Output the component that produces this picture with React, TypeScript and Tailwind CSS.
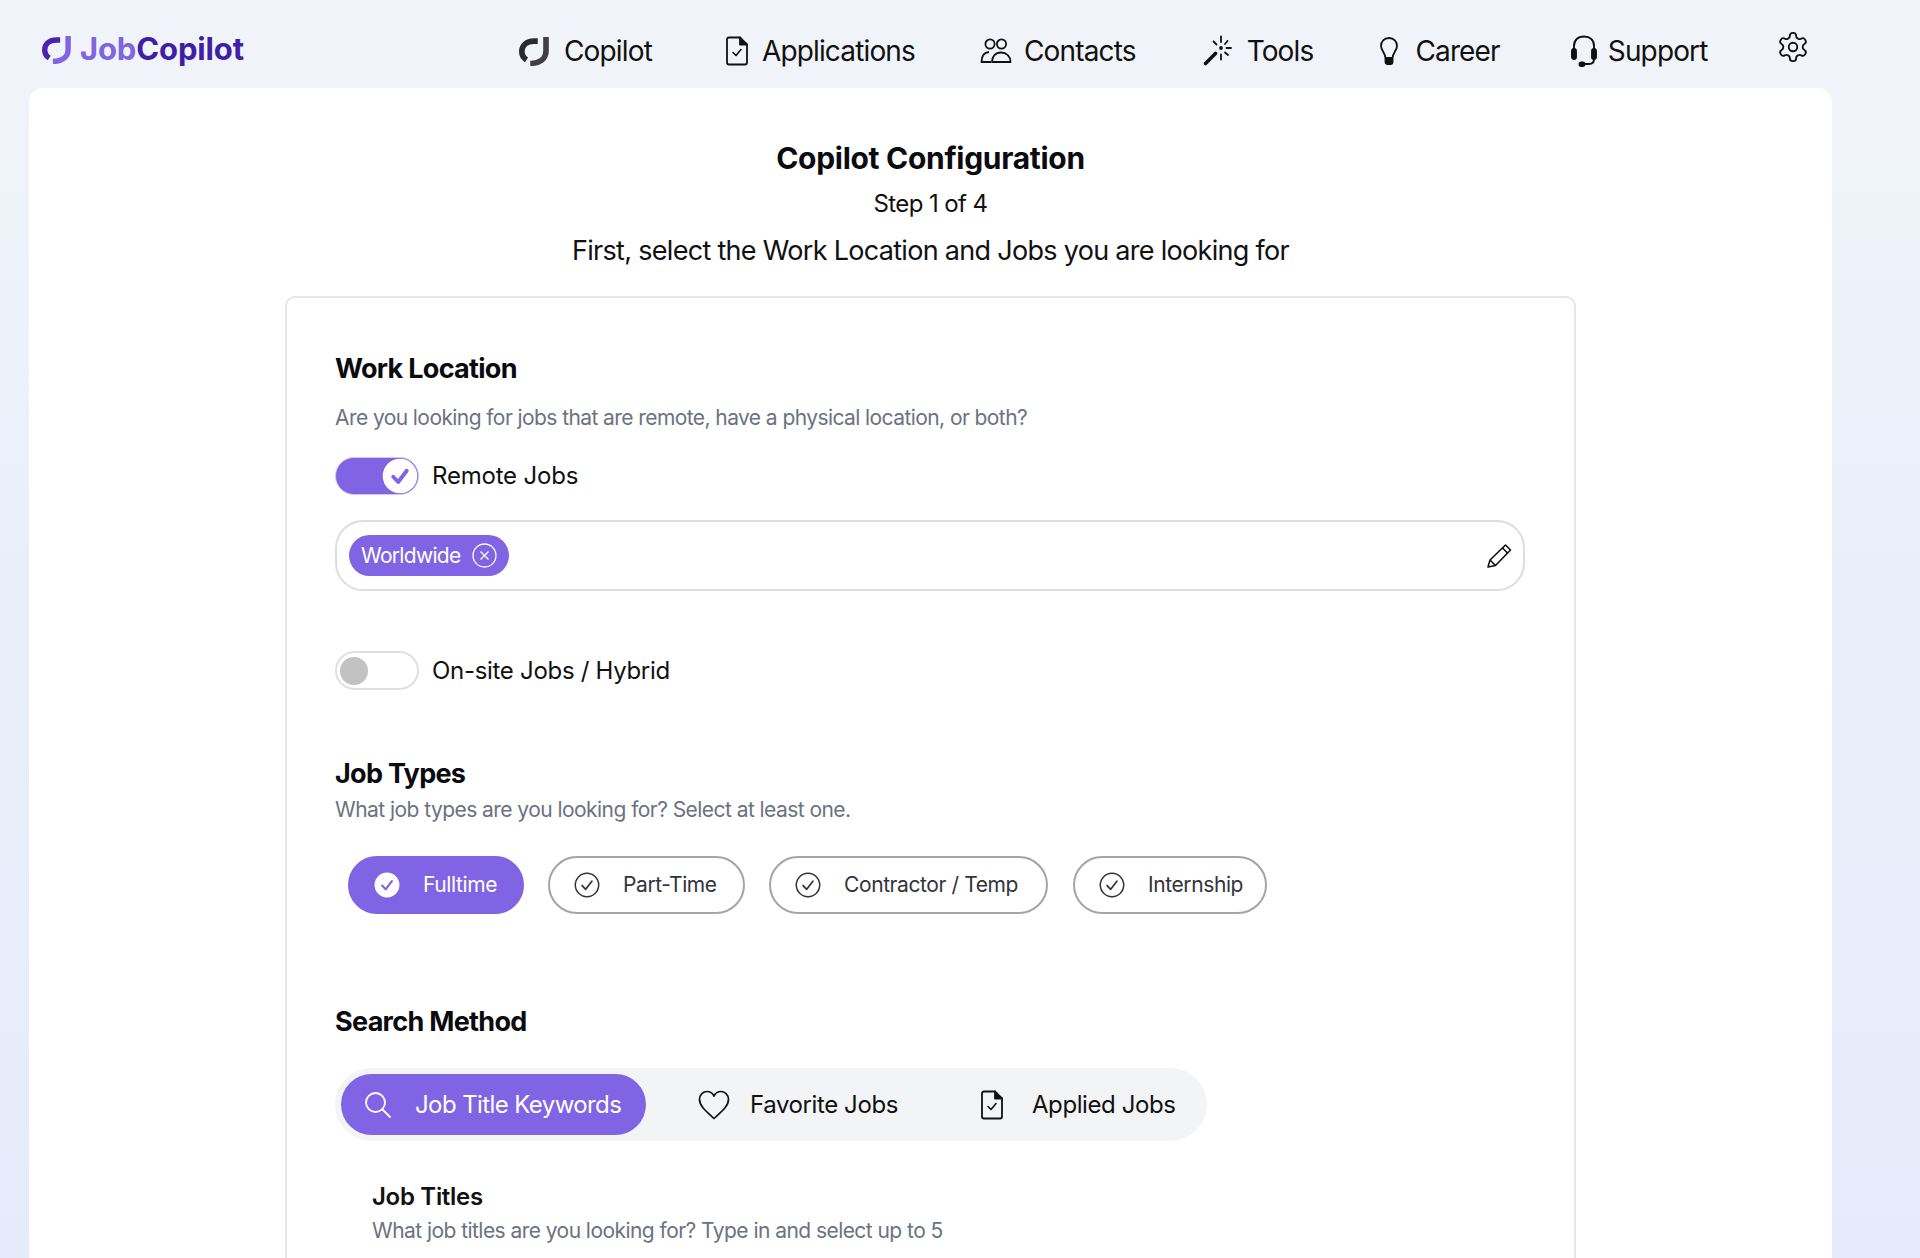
import React from "react";

const FONT = "font-['Inter','Liberation_Sans',sans-serif]";

function Mark({ a, b, size = 32 }: { a: string; b: string; size?: number }) {
  return (
    <svg width={size} height={size} viewBox="0 0 32 32" fill="none" strokeWidth="6">
      <path d="M20 5.5H16C8 5.5 3 10 3 16.5C3 20.5 5 23.5 8 25.5" stroke={a} />
      <path d="M28.8 1V16C28.8 24 22.5 29 12 29.3" stroke={b} />
    </svg>
  );
}

function DocCheck({ size = 30 }: { size?: number }) {
  return (
    <svg width={size} height={size} viewBox="0 0 24 30" fill="none" stroke="#111" strokeWidth="1.8" strokeLinejoin="round" strokeLinecap="round">
      <path d="M4 1.5H15L22 8.5V26.5C22 27.8 21 28.5 20 28.5H4C2.8 28.5 2 27.8 2 26.5V3.5C2 2.2 2.8 1.5 4 1.5Z" />
      <path d="M15 1.5V8.5H22" fill="#111" />
      <path d="M8 16.5L11 19.5L16 13.5" strokeWidth="1.6" />
    </svg>
  );
}

function Check({ size, circle, tick, fill, tickWidth = 1.6 }: { size: number; circle: string; tick: string; fill: string; tickWidth?: number }) {
  return (
    <svg width={size} height={size} viewBox="0 0 24 24" fill="none">
      <circle cx="12" cy="12" r="10.8" fill={fill} stroke={circle} strokeWidth="1.4" />
      <path d="M7.5 12.5L10.8 16L16.5 8.5" stroke={tick} strokeWidth={tickWidth} strokeLinecap="round" strokeLinejoin="round" />
    </svg>
  );
}

const nav: { label: string; icon: React.ReactNode; gap: string; ml: string }[] = [
  {
    label: "Copilot",
    ml: "ml-0",
    gap: "gap-[15px]",
    icon: <Mark a="#2b2b2f" b="#3f3f44" size={30} />,
  },
  { label: "Applications", ml: "ml-[70px]", gap: "gap-[10px]", icon: <DocCheck /> },
  {
    label: "Contacts",
    ml: "ml-[65px]",
    gap: "gap-[12px]",
    icon: (
      <svg width="32" height="28" viewBox="0 0 32 28" fill="none" stroke="#111" strokeWidth="1.8" strokeLinejoin="round">
        <circle cx="10" cy="7" r="4.6" />
        <circle cx="21.5" cy="7" r="4.6" />
        <path d="M9 15C4 15.5 1.5 19.5 1.5 25H11" />
        <path d="M12 25C12 19.5 15.5 15.5 21 15.5C26.5 15.5 30.5 19.5 30.5 25H12Z" />
      </svg>
    ),
  },
  {
    label: "Tools",
    ml: "ml-[66px]",
    gap: "gap-[15px]",
    icon: (
      <svg width="30" height="32" viewBox="0 0 30 32" fill="none" stroke="#111" strokeWidth="1.8" strokeLinecap="round">
        <path d="M3.5 28.5L13.5 18.5" strokeWidth="3.6" />
        <path d="M19 1.5V7M25.5 6L23 9M29 13H24.5M26 20L23 17.5M19 24.5V19.5M11.5 6.5L14.5 9.5" />
        <circle cx="19" cy="13" r="1.9" fill="#111" stroke="none" />
      </svg>
    ),
  },
  {
    label: "Career",
    ml: "ml-[66px]",
    gap: "gap-[16px]",
    icon: (
      <svg width="20" height="30" viewBox="0 0 20 30" fill="none" stroke="#111" strokeWidth="1.8">
        <path d="M10 2C5 2 2 5.7 2 10C2 14 6 16.5 6.5 22H13.5C14 16.5 18 14 18 10C18 5.7 15 2 10 2Z" />
        <path d="M6.5 23.5H13.5V26C13.5 27.5 12.5 28 11.5 28H8.5C7.5 28 6.5 27.5 6.5 26Z" fill="#111" />
      </svg>
    ),
  },
  {
    label: "Support",
    ml: "ml-[71px]",
    gap: "gap-[11px]",
    icon: (
      <svg width="26" height="32" viewBox="0 0 26 32" fill="none" stroke="#111" strokeWidth="1.9" strokeLinecap="round">
        <path d="M3 17V11C3 5 7 1.5 13 1.5C19 1.5 23 5 23 11V24C23 27 21 29 18 29H11" />
        <rect x="1" y="14" width="4" height="10" rx="2" fill="#111" />
        <rect x="21" y="14" width="4" height="10" rx="2" fill="#111" />
        <rect x="8.5" y="27.5" width="5" height="3.5" rx="1.7" fill="#111" />
      </svg>
    ),
  },
];

function Toggle({ on }: { on: boolean }) {
  if (on) {
    return (
      <div className="flex h-[38px] w-[84px] items-center justify-end rounded-full border border-[#cfc9f0] bg-[#8064e3]">
        <Check size={36} circle="#ffffff" tick="#8064e3" fill="#ffffff" tickWidth={2.6} />
      </div>
    );
  }
  return (
    <div className="flex h-[39px] w-[84px] items-center rounded-full border-2 border-[#e0e0e3] bg-white pl-[3px]">
      <div className="h-[28px] w-[28px] rounded-full bg-[#c2c2c2]" />
    </div>
  );
}

function Pill({ label, active, w, mr }: { label: string; active?: boolean; w: string; mr: string }) {
  return (
    <div
      className={`flex h-[58px] items-center rounded-full border-2 pl-[24px] ${w} ${mr} ${
        active ? "border-[#8064e3] bg-[#8064e3] text-white" : "border-[#a3a5ab] bg-white text-[#32343a]"
      }`}
    >
      <Check size={26} circle={active ? "#ffffff" : "#32343a"} tick={active ? "#8064e3" : "#32343a"} fill={active ? "#ffffff" : "none"} tickWidth={active ? 2 : 1.6} />
      <span className="ml-[23px] text-[21px] tracking-[-0.4px]">{label}</span>
    </div>
  );
}

export default function App() {
  return (
    <div className={`flex h-[1258px] w-[1920px] flex-col overflow-hidden bg-gradient-to-b from-[#f1f4f9] via-[#e9eefa] to-[#e6ebfb] ${FONT}`}>
      <header className="flex h-[88px] shrink-0 items-center pt-[14px] pl-[42px]">
        <div className="flex w-[477px] items-center gap-[9px] pb-[4px]">
          <Mark a="#4a22b0" b="#8064e3" size={29} />
          <span className="text-[31px] font-bold tracking-[-0.15px]">
            <span className="text-[#8064e3]">Job</span>
            <span className="text-[#3f1fa8]">Copilot</span>
          </span>
        </div>
        <nav className="flex items-center text-[28px] tracking-[-0.85px] text-[#111]">
          {nav.map((n) => (
            <div key={n.label} className={`flex items-center ${n.gap} ${n.ml}`}>
              {n.icon}
              <span>{n.label}</span>
            </div>
          ))}
          <svg className="mb-[8px] ml-[68px]" width="34" height="34" viewBox="0 0 24 24" fill="none" stroke="#111" strokeWidth="1.3" strokeLinejoin="round">
            <path d="M12.22 2h-.44a2 2 0 0 0-2 2v.18a2 2 0 0 1-1 1.73l-.43.25a2 2 0 0 1-2 0l-.15-.08a2 2 0 0 0-2.73.73l-.22.38a2 2 0 0 0 .73 2.73l.15.1a2 2 0 0 1 1 1.72v.51a2 2 0 0 1-1 1.74l-.15.09a2 2 0 0 0-.73 2.73l.22.38a2 2 0 0 0 2.73.73l.15-.08a2 2 0 0 1 2 0l.43.25a2 2 0 0 1 1 1.73V20a2 2 0 0 0 2 2h.44a2 2 0 0 0 2-2v-.18a2 2 0 0 1 1-1.73l.43-.25a2 2 0 0 1 2 0l.15.08a2 2 0 0 0 2.73-.73l.22-.39a2 2 0 0 0-.73-2.73l-.15-.08a2 2 0 0 1-1-1.74v-.5a2 2 0 0 1 1-1.74l.15-.09a2 2 0 0 0 .73-2.73l-.22-.38a2 2 0 0 0-2.73-.73l-.15.08a2 2 0 0 1-2 0l-.43-.25a2 2 0 0 1-1-1.73V4a2 2 0 0 0-2-2z" />
            <circle cx="12" cy="12" r="3" />
          </svg>
        </nav>
      </header>

      <main className="ml-[29px] flex h-[1170px] w-[1803px] flex-col items-center rounded-t-[14px] bg-white pt-[52px]">
        <h1 className="text-[30px] leading-[36px] font-bold tracking-[-0.3px] text-[#0b0b0f]">Copilot Configuration</h1>
        <p className="mt-[10px] text-[24px] leading-[36px] tracking-[-0.6px] text-[#111]">Step 1 of 4</p>
        <p className="mt-[11px] text-[27px] leading-[36px] tracking-[-0.7px] text-[#111]">First, select the Work Location and Jobs you are looking for</p>

        <section className="mt-[27px] flex w-[1291px] flex-1 flex-col rounded-t-[10px] border-2 border-b-0 border-[#e6e7ea] pt-[53px] pl-[48px]">
          <h2 className="text-[27px] leading-[36px] font-bold tracking-[-0.7px] text-[#0b0b0f]">Work Location</h2>
          <p className="mt-[13px] text-[21px] leading-[36px] tracking-[-0.58px] text-[#6b7280]">
            Are you looking for jobs that are remote, have a physical location, or both?
          </p>
          <div className="mt-[21px] flex items-center gap-[13px]">
            <Toggle on />
            <span className="text-[24px] tracking-[-0.2px] text-[#111]">Remote Jobs</span>
          </div>
          <div className="mt-[25px] flex h-[71px] w-[1190px] items-center justify-between rounded-[28px] border-2 border-[#dcdde0] pr-[11px] pl-[12px]">
            <div className="flex h-[41px] w-[160px] items-center rounded-full bg-[#8064e3] pl-[12px] text-white">
              <span className="text-[21px] tracking-[-0.7px]">Worldwide</span>
              <svg className="ml-[12px]" width="25" height="25" viewBox="0 0 25 25" fill="none" stroke="#fff" strokeWidth="1.3">
                <circle cx="12.5" cy="12.5" r="11.5" />
                <path d="M8.5 8.5L16.5 16.5M16.5 8.5L8.5 16.5" />
              </svg>
            </div>
            <svg width="26" height="26" viewBox="0 0 26 26" fill="none" stroke="#111" strokeWidth="1.6" strokeLinejoin="round">
              <path d="M2 24L4 17L19.5 2L24.5 7L9.5 22.5Z" />
              <path d="M4 17L9.5 22.5M16.5 5L21.5 10" />
            </svg>
          </div>
          <div className="mt-[60px] flex items-center gap-[13px]">
            <Toggle on={false} />
            <span className="text-[24px] tracking-[-0.3px] text-[#111]">On-site Jobs / Hybrid</span>
          </div>
          <h2 className="mt-[66px] text-[27px] leading-[36px] font-bold tracking-[-0.7px] text-[#0b0b0f]">Job Types</h2>
          <p className="text-[21px] leading-[36px] tracking-[-0.55px] text-[#6b7280]">What job types are you looking for? Select at least one.</p>
          <div className="mt-[28px] ml-[13px] flex">
            <Pill label="Fulltime" active w="w-[176px]" mr="mr-[24px]" />
            <Pill label="Part-Time" w="w-[197px]" mr="mr-[24px]" />
            <Pill label="Contractor / Temp" w="w-[279px]" mr="mr-[25px]" />
            <Pill label="Internship" w="w-[194px]" mr="mr-0" />
          </div>
          <h2 className="mt-[90px] text-[27px] leading-[36px] font-bold tracking-[-0.7px] text-[#0b0b0f]">Search Method</h2>
          <div className="mt-[28px] flex h-[73px] w-[872px] items-center rounded-full bg-[#f3f4f6] pl-[6px] text-[24px] tracking-[-0.4px] text-[#111]">
            <div className="flex h-[61px] w-[305px] items-center rounded-full bg-[#8064e3] pl-[23px] text-white">
              <svg width="28" height="28" viewBox="0 0 28 28" fill="none" stroke="#fff" strokeWidth="1.8" strokeLinecap="round">
                <circle cx="11.5" cy="11.5" r="9.5" />
                <path d="M18.5 18.5L26 26" />
              </svg>
              <span className="ml-[23px] tracking-[-0.6px]">Job Title Keywords</span>
            </div>
            <svg className="ml-[52px]" width="32" height="30" viewBox="0 0 32 30" fill="none" stroke="#111" strokeWidth="1.7" strokeLinejoin="round">
              <path d="M16 28.5C9 22 1.5 16.5 1.5 9.5C1.5 4.5 5.5 1.5 9 1.5C12 1.5 14.5 3 16 6C17.5 3 20 1.5 23 1.5C26.5 1.5 30.5 4.5 30.5 9.5C30.5 16.5 23 22 16 28.5Z" />
            </svg>
            <span className="ml-[20px]">Favorite Jobs</span>
            <span className="ml-[79px]"><DocCheck /></span>
            <span className="ml-[25px]">Applied Jobs</span>
          </div>
          <div className="mt-[40px] ml-[37px]">
            <h3 className="text-[24px] leading-[32px] font-semibold tracking-[-0.3px] text-[#111]">Job Titles</h3>
            <p className="text-[21px] leading-[36px] tracking-[-0.55px] text-[#6b7280]">What job titles are you looking for? Type in and select up to 5</p>
          </div>
        </section>
      </main>
    </div>
  );
}
